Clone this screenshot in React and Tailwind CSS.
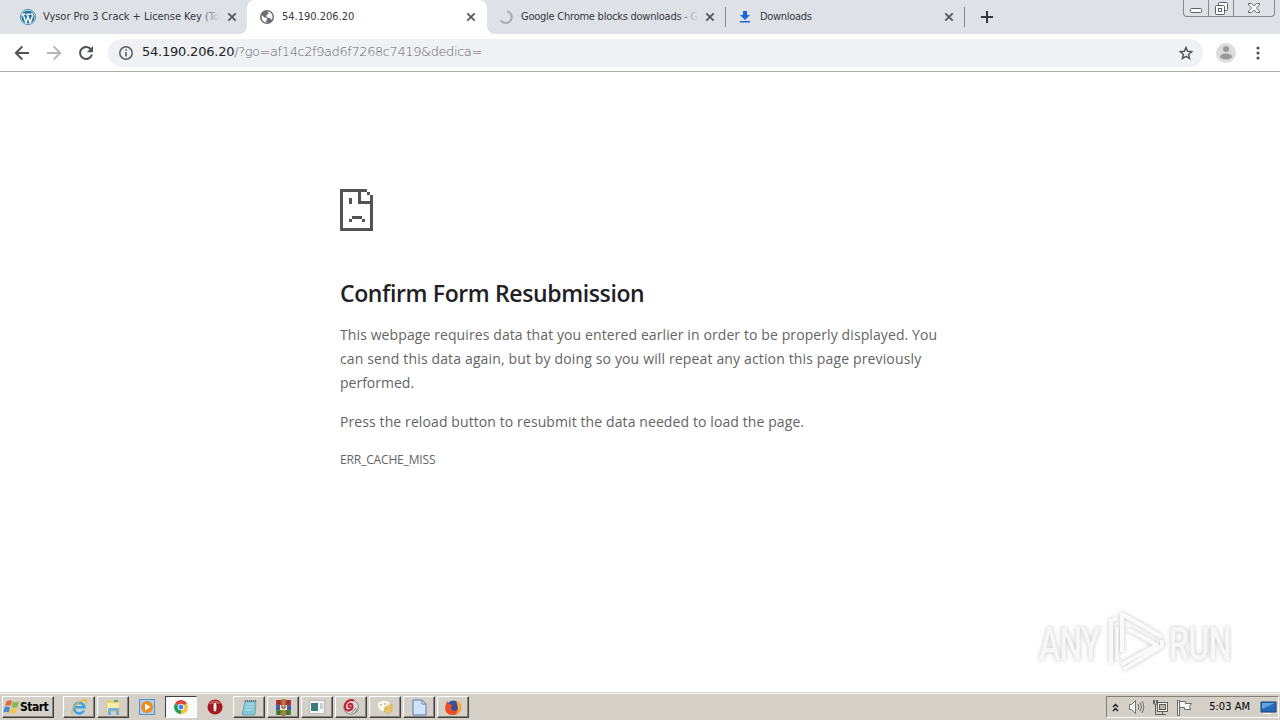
import React from "react";

const WordPressIcon = () => (
    <svg width="16" height="16" viewBox="0 0 16 16" className="shrink-0">
        <circle cx="8" cy="8" r="7.6" fill="#fff" stroke="#2a7ba6" strokeWidth="0.8" />
        <circle cx="8" cy="8" r="6.6" fill="#21759b" />
        <path d="M1.8 5.2h3.8M6.5 5.2h4M3 5.4l3 8 2-5.6M7 5.4l3.2 8 2.3-6.2c.4-1.4-.9-2-.8-3.2" fill="none" stroke="#fff" strokeWidth="1.5" />
    </svg>
);

const GlobeIcon = () => (
    <svg width="14" height="14" viewBox="0 0 14 14" className="shrink-0">
        <circle cx="7" cy="7" r="7" fill="#6b6e72" />
        <path d="M2 5.2l2.5 2.3 2.3.3.4 1.5-1 1.2.2 2.2C3.7 12.3 1.6 9.8 1.6 7zM7.5 1.5c3 .2 5 2.6 5 5.5 0 1-.2 1.900-.7 2.700L10.300 8.200 8 7.800 6.200 6.200l.6-1.400 2-.8z" fill="#fff" />
    </svg>
);

const SpinnerIcon = () => (
    <svg width="16" height="16" viewBox="0 0 16 16" className="shrink-0">
        <path d="M9 2.200A6 6 0 1 1 2.800 11.500" fill="none" stroke="#a9abb0" strokeWidth="2" />
    </svg>
);

const DownloadIcon = () => (
    <svg width="12" height="14" viewBox="0 0 12 14" className="shrink-0">
        <path d="M4 1h4v4h3L6 10 1 5h3zM1 11h10v1.500H1z" fill="#1a66dc" />
    </svg>
);

const CloseIcon = () => (
    <svg width="10" height="10" viewBox="0 0 10 10" className="shrink-0">
        <path d="M1.300 1.300l7.400 7.400M8.700 1.300L1.300 8.700" stroke="#55585d" strokeWidth="1.800" />
    </svg>
);

const Tab = ({ icon, title, fade, className }) => (
    <div className={`flex h-full shrink-0 items-center ${className}`}>
        {icon}
        <div className="relative ml-[7px] w-[177px] overflow-hidden pt-px whitespace-nowrap">
            {title}
            {fade && <span className="absolute top-0 right-0 h-full w-5 bg-linear-to-r from-transparent to-[#dee1e6]" />}
        </div>
        <span className="ml-auto flex"><CloseIcon /></span>
    </div>
);

const WindowControls = () => (
    <div className="mr-[5px] ml-auto flex h-[17px] w-[92px] rounded-b-[4px] border border-t-0 border-[#858990]">
        <div className="flex w-[25px] justify-center border-r border-[#858990] pt-2">
            <svg width="12" height="5" viewBox="0 0 12 5">
                <rect x="0.500" y="0.500" width="11" height="4" rx="1" fill="#fff" stroke="#5a5f69" />
            </svg>
        </div>
        <div className="flex w-[25px] justify-center border-r border-[#858990] pt-[2px]">
            <svg width="13" height="13" viewBox="0 0 13 13" fill="#fff" stroke="#5a5f69">
                <rect x="3.500" y="0.500" width="9" height="8" rx="1" />
                <rect x="0.500" y="3.500" width="9" height="9" rx="1" />
                <rect x="3.500" y="6.500" width="3" height="3" />
            </svg>
        </div>
        <div className="flex flex-1 justify-center pt-[3px]">
            <svg width="12" height="10" viewBox="0 0 12 10">
                <path d="M.5.500h3L6 3 8.500.500h3V2L8.300 5l3.200 3v1.500h-3L6 7 3.500 9.500h-3V8l3.200-3L.5 2z" fill="#fff" stroke="#5a5f69" strokeWidth="0.900" />
            </svg>
        </div>
    </div>
);

const TabStrip = () => (
    <div className="flex h-[34px] bg-[#dee1e6] font-['DejaVu_Sans_Condensed','DejaVu_Sans',sans-serif] text-[11px] text-[#35383e]">
        <Tab
            icon={<WordPressIcon />}
            title={<span className="tracking-[-0.04px]">Vysor Pro 3 Crack + License Key (To</span>}
            fade
            className="w-[247px] pr-[10px] pl-5"
        />
        <div className="relative h-full w-[240px] rounded-t-lg bg-white">
            <Tab icon={<GlobeIcon />} title={<span className="ml-px">54.190.206.20</span>} className="pr-[11px] pl-[13px]" />
            <svg className="absolute bottom-0 -left-2" width="8" height="8" viewBox="0 0 8 8">
                <path d="M8 0v8H0a8 8 0 0 0 8-8" fill="#fff" />
            </svg>
            <svg className="absolute -right-2 bottom-0" width="8" height="8" viewBox="0 0 8 8">
                <path d="M0 0v8h8a8 8 0 0 1-8-8" fill="#fff" />
            </svg>
        </div>
        <Tab
            icon={<SpinnerIcon />}
            title={<span className="tracking-[-0.24px]">Google Chrome blocks downloads - G</span>}
            fade
            className="w-[238px] pr-[10px] pl-[11px]"
        />
        <div className="mt-[7px] h-5 w-px bg-[#85888d]" />
        <Tab icon={<DownloadIcon />} title={<span className="ml-[2px] tracking-[-0.3px]">Downloads</span>} className="w-[238px] pr-[10px] pl-[13px]" />
        <div className="mt-[7px] h-5 w-px bg-[#85888d]" />
        <svg className="mt-[11px] ml-4" width="12" height="12" viewBox="0 0 12 12">
            <path d="M6 0v12M0 6h12" stroke="#35383e" strokeWidth="2" />
        </svg>
        <WindowControls />
    </div>
);

const Toolbar = () => (
    <div className="flex h-[38px] items-center border-b border-[#a9aba9] bg-white">
        <svg className="ml-[14px]" width="16" height="16" viewBox="0 0 16 16" fill="none" stroke="#505357" strokeWidth="1.900">
            <path d="M15 8H2M8.300 1.500L1.800 8l6.500 6.500" />
        </svg>
        <svg className="ml-4" width="16" height="16" viewBox="0 0 16 16" fill="none" stroke="#b5b7ba" strokeWidth="1.900">
            <path d="M1 8h13M7.700 1.500L14.200 8l-6.500 6.500" />
        </svg>
        <svg className="ml-4" width="16" height="16" viewBox="0 0 16 16">
            <path d="M13.200 4.800A6 6 0 1 0 13.900 9.500" fill="none" stroke="#505357" strokeWidth="2" />
            <path d="M15 1v6.200H8.800z" fill="#505357" />
        </svg>
        <div className="ml-[14px] flex h-7 w-[1095px] items-center rounded-full bg-[#eff1f4] pr-[10px] pl-[11px]">
            <svg width="14" height="14" viewBox="0 0 14 14">
                <circle cx="7" cy="7" r="6.200" fill="none" stroke="#5a5d61" strokeWidth="1.500" />
                <path d="M6.200 6h1.600v4.500H6.200zM6.200 3.300h1.600v1.500H6.200z" fill="#5a5d61" />
            </svg>
            <div className="ml-[9px] pb-px whitespace-nowrap font-['DejaVu_Sans',sans-serif] text-[13px] font-extralight text-[#64686d]">
                <span className="font-normal tracking-[-0.22px] text-[#222427]">54.190.206.20</span>
                <span className="tracking-[-0.42px]">/?go=af14c2f9ad6f7268c7419&amp;dedica=</span>
            </div>
            <svg className="ml-auto" width="14" height="14" viewBox="0 0 14 14">
                <path d="M7 1.400l1.600 3.900 4.200.3-3.200 2.800 1 4.100L7 10.300l-3.600 2.200 1-4.100L1.200 5.600l4.200-.3z" fill="none" stroke="#505357" strokeWidth="1.400" />
            </svg>
        </div>
        <svg className="ml-[13px]" width="20" height="20" viewBox="0 0 20 20">
            <circle cx="10" cy="10" r="10" fill="#dcdcdc" />
            <circle cx="10" cy="6" r="3" fill="#999" />
            <ellipse cx="10" cy="13.500" rx="6" ry="3" fill="#999" />
        </svg>
        <svg className="ml-5" width="4" height="14" viewBox="0 0 4 14" fill="#505357">
            <circle cx="2" cy="2" r="1.600" />
            <circle cx="2" cy="7" r="1.600" />
            <circle cx="2" cy="12" r="1.600" />
        </svg>
    </div>
);

const SadPageIcon = () => (
    <svg width="33" height="42" viewBox="0 0 33 42" shapeRendering="crispEdges">
        <path
            d="M0 0h27v3H21v9h9V6h3v36H0zM3 3v36h27V15H18V3zM27 3h3v3h-3zM9 9h3v6H9zM12 27h10v3H12zM9 30h3v3H9zM22 30h3v3h-3z"
            fill="#535353"
            fillRule="evenodd"
        />
    </svg>
);

const Watermark = () => (
    <div className="absolute top-[537px] left-[1039px] flex h-[64px] items-center font-['Roboto',sans-serif] text-[47px] leading-none font-medium text-[#f7f7f7] [filter:drop-shadow(0_0_2px_#c4c4c4)]">
        <span className="w-[68px] origin-left scale-x-[0.68] pt-1 tracking-[-1px]">ANY</span>
        <svg className="shrink-0" width="58" height="62" viewBox="0 0 58 62" fill="none" stroke="#fafafa" strokeWidth="4" strokeLinejoin="round">
            <path d="M4 53V11l5-3" />
            <path d="M15 42V4l40 23" />
            <path d="M10 50V17" strokeWidth="3" />
            <path d="M21 19l29 16-36 20" />
            <path d="M17 59l38-23v-6" />
        </svg>
        <span className="ml-1 w-[70px] origin-left scale-x-[0.68] pt-1 tracking-[-1px]">RUN</span>
    </div>
);

const ErrorPage = () => (
    <main className="relative h-[620px] bg-white pt-[117px] pl-[340px] font-['Open_Sans',sans-serif] text-[#646464]">
        <SadPageIcon />
        <h1 className="mt-[45px] whitespace-nowrap text-[23px] leading-[34px] font-semibold tracking-[-0.38px] text-[#202124]">
            Confirm Form Resubmission
        </h1>
        <div className="mt-[13px] whitespace-nowrap text-[14px] leading-6">
            <p>
                <span className="tracking-[0.1px]">This webpage requires data that you entered earlier in order to be properly displayed. You</span><br />
                <span className="tracking-[0.145px]">can send this data again, but by doing so you will repeat any action this page previously</span><br />
                performed.
            </p>
            <p className="mt-[15px] tracking-[0.1px]">Press the reload button to resubmit the data needed to load the page.</p>
        </div>
        <p className="mt-[14px] text-[12px] leading-6 tracking-[-0.15px]">ERR_CACHE_MISS</p>
        <Watermark />
    </main>
);

const IeIcon = () => (
    <svg width="18" height="18" viewBox="0 0 18 18" fill="none">
        <path d="M14 12.500a5.300 5.300 0 1 1 .5-3.200H5" stroke="#39a5e4" strokeWidth="2.600" />
        <path d="M2.500 16C-1 13 8 2 15.500 2c2 .5 1 3 0 4.500" stroke="#e5b83b" strokeWidth="1.300" />
    </svg>
);

const FolderIcon = () => (
    <svg width="18" height="18" viewBox="0 0 18 18">
        <path d="M2 2h5l1 2h8v10H2z" fill="#e5ce73" />
        <path d="M3 5h12v8H3z" fill="#faedaf" />
        <path d="M4 17v-7h11v7h-3v-4H7v4z" fill="#72b4df" />
        <path d="M10 2h4v2h-4z" fill="#69ad63" />
    </svg>
);

const PlayerIcon = () => (
    <svg width="16" height="16" viewBox="0 0 16 16">
        <rect x="0.500" y="0.500" width="15" height="15" fill="#a9d1ef" stroke="#5794c5" />
        <circle cx="8" cy="8" r="6" fill="#f28b1d" />
        <path d="M6 4.500v7L11.500 8z" fill="#fff" />
    </svg>
);

const ChromeIcon = () => (
    <svg width="14" height="14" viewBox="0 0 14 14">
        <path d="M7 7L1 3.500A7 7 0 0 1 13 3.500z" fill="#dc4437" />
        <path d="M7 7l6-3.500A7 7 0 0 1 7 14z" fill="#f4c430" />
        <path d="M7 7v7A7 7 0 0 1 1 3.500z" fill="#299b57" />
        <circle cx="7" cy="7" r="3.300" fill="#fff" />
        <circle cx="7" cy="7" r="2.400" fill="#427fe2" />
    </svg>
);

const OperaIcon = () => (
    <svg width="16" height="16" viewBox="0 0 16 16">
        <circle cx="8" cy="8" r="7.500" fill="#a8181e" />
        <path d="M2 5a7 7 0 0 1 12 0z" fill="#cf5556" />
        <ellipse cx="8" cy="8" rx="2" ry="5" fill="#f2eeee" stroke="#791014" strokeWidth="0.700" />
    </svg>
);

const NotepadIcon = () => (
    <svg width="17" height="17" viewBox="0 0 17 17">
        <path d="M4 2h11l-1 14H1z" fill="#85c6d5" stroke="#5e99a6" strokeWidth="0.700" />
        <path d="M5 5h8M4.500 8h8M4 11h8" stroke="#b8e2e9" />
        <path d="M4 2h11" stroke="#676d70" strokeWidth="2" strokeDasharray="1 1" />
    </svg>
);

const WinRarIcon = () => (
    <svg width="17" height="17" viewBox="0 0 17 17">
        <path d="M1 1h15v5H1z" fill="#b3303c" />
        <path d="M1 6h15v5H1z" fill="#3f5cb5" />
        <path d="M1 11h15v5H1z" fill="#40903a" />
        <path d="M6.500 0h4v17h-4z" fill="#b37d39" />
        <path d="M5 6h7v5H5z" fill="#f5e6ba" />
        <path d="M7 6v3h3V6M4 1v4M13 1v4M4 12v4M13 12v4" fill="none" stroke="#712b27" />
    </svg>
);

const AppWindowIcon = () => (
    <svg width="16" height="14" viewBox="0 0 16 14">
        <rect x="0.500" y="0.500" width="15" height="13" fill="#f7f7f7" stroke="#bbb" />
        <path d="M2 3h7v8H2z" fill="#397c75" />
        <path d="M11 4h3M11 6h3M11 8h3" stroke="#a4a4a4" />
    </svg>
);

const RedSwirlIcon = () => (
    <svg width="16" height="16" viewBox="0 0 16 16">
        <circle cx="8" cy="8" r="7.300" fill="#dcdada" stroke="#8e8989" />
        <path d="M11 1.500C5-.5 1 5 2.200 9.500 4 13 9.500 11.500 9.500 7.500 9.500 4 5.500 4 5.500 7c0 1.500 1.800 1.500 2 .3" fill="none" stroke="#c1202c" strokeWidth="2" />
        <path d="M8.500 14l4.500-5M12 14l2.500-4" stroke="#777" />
    </svg>
);

const MaskIcon = () => (
    <svg width="18" height="16" viewBox="0 0 18 16">
        <path d="M1 5q0-3 4-3 3-2 6 0 4 0 3 5-1 5-6 6-6-1-7-8z" fill="#fbf9f2" stroke="#d4ceb9" />
        <path d="M9 8l7-3v7l-4 3-4-3z" fill="#edc66a" stroke="#cfaa58" strokeWidth="0.700" />
        <path d="M4 6h2M8 5h2M10.500 10h1M13.500 9h1" stroke="#a8915a" />
    </svg>
);

const DocumentIcon = () => (
    <svg width="15" height="17" viewBox="0 0 15 17">
        <path d="M1 1h9l4 4v11H1z" fill="#d0e3f9" stroke="#5a7dab" />
        <path d="M10 1v4h4z" fill="#fff" stroke="#5a7dab" />
    </svg>
);

const FirefoxIcon = () => (
    <svg width="17" height="17" viewBox="0 0 17 17">
        <circle cx="8.500" cy="8.500" r="7" fill="#3550a0" />
        <path d="M2 2l2 3 4 1-2 2c0 5 6 5 7 1l-1-4 2 1-2-4c7 3 5 14-4 14S-1 9 2 2" fill="#ec4f25" />
        <path d="M11 1c6 3 7 12 0 14 3-4 2-8 1-10z" fill="#fdb52b" />
    </svg>
);

const raised = "border border-t-white border-l-white border-r-[#404040] border-b-[#404040] shadow-[inset_-1px_-1px_#87837b]";
const pressed = "border border-t-[#404040] border-l-[#404040] border-r-white border-b-white bg-[#f9f9f8]";

const taskItems = [
    { Icon: IeIcon, look: raised },
    { Icon: FolderIcon, look: raised },
    { Icon: PlayerIcon, look: "" },
    { Icon: ChromeIcon, look: pressed },
    { Icon: OperaIcon, look: "" },
    { Icon: NotepadIcon, look: raised },
    { Icon: WinRarIcon, look: raised },
    { Icon: AppWindowIcon, look: raised },
    { Icon: RedSwirlIcon, look: raised },
    { Icon: MaskIcon, look: raised },
    { Icon: DocumentIcon, look: raised },
    { Icon: FirefoxIcon, look: raised },
];

const Tray = () => (
    <div className="mr-px ml-auto flex h-[22px] w-[173px] items-center border border-t-[#858179] border-r-white border-b-white border-l-[#858179] pr-px pl-[5px]">
        <svg width="7" height="9" viewBox="0 0 7 9" fill="none" stroke="#111" strokeWidth="1.300">
            <path d="M1 4l2.500-2.500L6 4M1 8l2.500-2.500L6 8" />
        </svg>
        <svg className="ml-[9px]" width="18" height="16" viewBox="0 0 18 16" fill="none" stroke="#73716d">
            <path d="M1.500 5.500h2l4-4v13l-4-4h-2z" fill="#f9f9f8" />
            <path d="M10 5q2 3 0 6M12 3.500q3 4.500 0 9M14 2q3.500 6 0 12" />
        </svg>
        <svg className="ml-[6px]" width="17" height="17" viewBox="0 0 17 17" fill="none" stroke="#5f5e5a">
            <rect x="5.500" y="3.500" width="10" height="9" fill="#f4f3f0" />
            <rect x="7.500" y="5.500" width="6" height="5" fill="#b5b2aa" />
            <path d="M1.500 1v4h4V1M2.500 1v3M4.500 1v3M3.500 5v10.500H14M10.500 13v2" />
        </svg>
        <svg className="ml-[7px]" width="17" height="17" viewBox="0 0 17 17" fill="#f8f8f7" stroke="#696864">
            <path d="M1.500 1.500h2v15h-2zM3.500 2.500h6v2h6l-2 3 1 3h-6v-2h-5z" />
        </svg>
        <span className="ml-auto whitespace-nowrap text-[11px] tracking-[0.02px]">5:03 AM</span>
        <svg className="ml-[10px]" width="17" height="16" viewBox="0 0 17 16">
            <path d="M1 3h15v10H1z" fill="#2468b7" stroke="#174270" />
            <path d="M2 4h13L2 10z" fill="#62a2df" />
            <path d="M3 14.500h8" stroke="#f5f5f5" />
        </svg>
    </div>
);

const Taskbar = () => (
    <div className="flex h-7 flex-col bg-[#d4d0c8] font-['DejaVu_Sans_Condensed','DejaVu_Sans',sans-serif] text-black">
        <div className="mt-px h-px shrink-0 bg-white" />
        <div className="flex flex-1 items-center pl-[2px]">
            <button className={`mr-[9px] flex h-[22px] w-[52px] items-center ${raised}`}>
                <svg className="shrink-0" width="17" height="16" viewBox="0 0 17 16">
                    <path d="M3.500 2.500q3-2 5.500-.5L7.500 7Q5 5.500 2 7.300z" fill="#e8673b" />
                    <path d="M10 2.500q3 1.500 6 0L14.500 8q-3 1.500-6-.2z" fill="#82b94b" />
                    <path d="M1.500 8.500q3-2 5.500-.2L5.700 13.500q-2.500-1.700-5.500 0z" fill="#4789cc" />
                    <path d="M8 9q3 1.500 6 0L12.500 14q-3 1.500-6-.3z" fill="#f3c44c" />
                </svg>
                <span className="text-[12px] font-bold tracking-[-0.5px]">Start</span>
            </button>
            <div className="flex gap-[2px]">
                {taskItems.map(({ Icon, look }, index) => (
                    <button key={index} className={`flex h-[22px] w-8 items-center justify-center ${look}`}>
                        <Icon />
                    </button>
                ))}
            </div>
            <Tray />
        </div>
    </div>
);

export default function App() {
    return (
        <div className="flex h-[720px] w-[1280px] flex-col overflow-hidden bg-white">
            <TabStrip />
            <Toolbar />
            <ErrorPage />
            <Taskbar />
        </div>
    );
}
